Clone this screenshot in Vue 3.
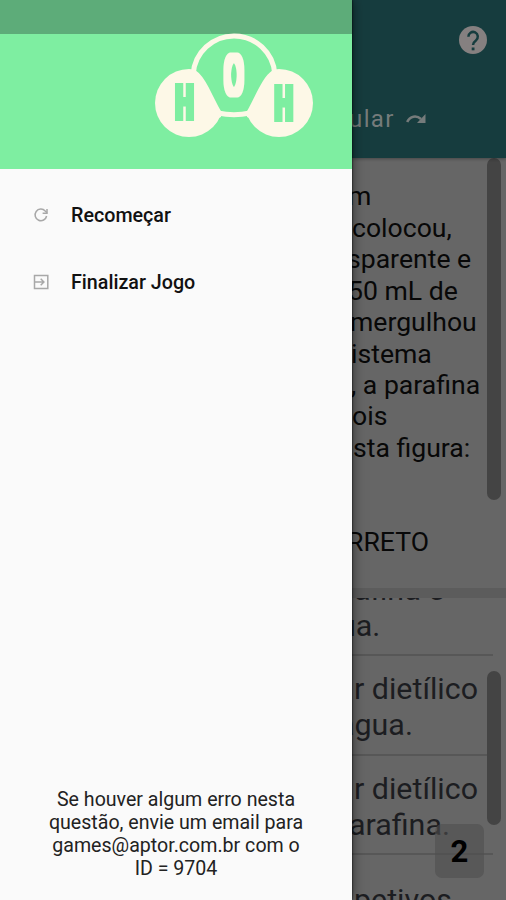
<template>
  <div class="screen">
    <aside class="drawer">
      <div class="status-bar" />
      <header class="drawer-header">
        <svg class="logo" width="164" height="112" viewBox="0 0 164 112">
          <filter id="thicken" x="-50%" y="-50%" width="200%" height="200%" color-interpolation-filters="sRGB">
            <feMorphology operator="dilate" radius="3 3" />
          </filter>
          <circle cx="37" cy="70" r="34" class="blob" />
          <circle cx="127" cy="70" r="34" class="blob" />
          <path class="blob" d="M58 60L69 77V84C62 86 60 91 56 96L40 70Z" />
          <path class="blob" d="M106 60L95 77V84C102 86 104 91 108 96L124 70Z" />
          <path class="core" d="M43 37C54 44 59 61 70 80H94C105 61 110 44 121 37Z" />
          <path class="ring" d="M41.2 41A40.9 40.9 0 0 1 122.8 41" />
          <path class="ring" d="M66 80Q82 83.5 98 80" />
          <g filter="url(#thicken)">
            <text class="letter-h" transform="translate(32.5 85) scale(.55 1)">H</text>
          </g>
          <g filter="url(#thicken)">
            <text class="letter-h" transform="translate(131.8 85.5) scale(.55 1)">H</text>
          </g>
          <g filter="url(#thicken)">
            <text class="letter-o" transform="translate(82 60.5) scale(.5 1)">O</text>
          </g>
        </svg>
      </header>

      <nav class="menu">
        <a class="menu-item">
          <svg width="16" height="16" viewBox="0 0 16 16">
            <path d="M13.6 9A5.8 5.8 0 1 1 12.2 4L14 5.7" />
            <path d="M14 2V6.2H9.6" />
          </svg>
          <span>Recomeçar</span>
        </a>
        <a class="menu-item">
          <svg width="16" height="16" viewBox="0 0 16 16">
            <path d="M1.5 1.5H14.8V14.5H1.5Z" />
            <path d="M1.5 8H10.5M7.7 4.8L10.9 8L7.7 11.2" />
          </svg>
          <span>Finalizar Jogo</span>
        </a>
      </nav>

      <p class="contact">
        Se houver algum erro nesta<br />questão, envie um email para<br />games@aptor.com.br com o<br />ID = 9704
      </p>
    </aside>

    <main class="game">
      <header class="toolbar">
        <svg class="help" width="28" height="28" viewBox="0 0 28 28">
          <circle cx="14" cy="14" r="14" fill="#858080" />
          <path d="M9.4 10.8A4.7 4.7 0 1 1 16.9 14.4C15 15.8 14 16.6 14 19" fill="none" stroke="#163c3e" stroke-width="2.5" />
          <rect x="12.7" y="21.5" width="2.8" height="2.8" fill="#163c3e" />
        </svg>
        <div class="skip">
          <span>ular</span>
          <svg width="20" height="12" viewBox="0 0 20 12">
            <path d="M1.2 9C4 2.8 10.5 2 15 6" fill="none" stroke="#757b7b" stroke-width="2.6" />
            <path d="M19.5 1V10H11Z" fill="#757b7b" />
          </svg>
        </div>
      </header>

      <section class="question">
        <div class="question-text">
          <p v-for="(line, i) in question" :key="i" :style="{ marginLeft: line.shift + 'px' }">{{ line.text }}</p>
        </div>
        <div class="thumb question-thumb" />
      </section>

      <section class="answers">
        <div class="answer-list">
          <div v-for="(answer, i) in answers" :key="i" class="answer">
            <p v-for="(line, j) in answer" :key="j" :style="{ marginLeft: line.shift + 'px' }">{{ line.text }}</p>
          </div>
        </div>
        <div class="thumb answers-thumb" />
        <div class="counter">2</div>
      </section>
    </main>
  </div>
</template>

<script setup>
// shift: where the visible part of the line starts next to the open drawer
const question = [
  { text: 'm', shift: -4 },
  { text: 'colocou,', shift: 0 },
  { text: 'sparente e', shift: -5 },
  { text: '50 mL de', shift: -4 },
  { text: 'mergulhou', shift: -2 },
  { text: 'istema', shift: -1 },
  { text: ', a parafina', shift: -1 },
  { text: 'ois', shift: 0 },
  { text: 'sta figura:', shift: 1 },
  { text: '', shift: 0 },
  { text: '', shift: 0 },
  { text: 'RRETO', shift: -5 },
]

const answers = [
  [
    { text: 'afina e', shift: 2 },
    { text: 'ua.', shift: -13 },
  ],
  [
    { text: 'r dietílico', shift: 2 },
    { text: 'água.', shift: -14 },
  ],
  [
    { text: 'r dietílico', shift: 2 },
    { text: 'arafina.', shift: -3 },
  ],
  [{ text: 'petivos', shift: 2 }],
]
</script>

<style scoped>
.screen {
  position: relative;
  display: flex;
  width: 506px;
  height: 900px;
  overflow: hidden;
  font-family: Roboto, sans-serif;
}

p {
  margin: 0;
}

.drawer {
  display: flex;
  flex-direction: column;
  flex: none;
  width: 352px;
  background: #fafafa;
  box-shadow: 0 0 12px rgba(0, 0, 0, 0.55), 0 0 2px #000;
  z-index: 2;
}

.status-bar {
  height: 34px;
  background: #5dac79;
}

.drawer-header {
  display: flex;
  justify-content: flex-end;
  height: 135px;
  padding-right: 36px;
  background: #7eeea1;
}

.logo {
  margin-top: -1px;
}

.ring {
  fill: none;
  stroke: #fdf8e7;
  stroke-width: 5;
}

.blob {
  fill: #fdf8e7;
}

.core {
  fill: #7eeea1;
}

.letter-h,
.letter-o {
  text-anchor: middle;
}

.letter-h {
  font-size: 43.5px;
  font-weight: 400;
  fill: #7eeea1;
}

.letter-o {
  font-size: 54px;
  font-weight: 300;
  fill: #fdf8e7;
}

.menu {
  display: flex;
  flex-direction: column;
  padding-top: 13px;
}

.menu-item {
  display: flex;
  align-items: center;
  gap: 22px;
  height: 67.3px;
  padding-left: 33px;
  font-size: 19.7px;
  font-weight: 500;
  color: #111;
}

.menu-item svg {
  margin-bottom: 2px;
  fill: none;
  stroke: #a8a8a8;
  stroke-width: 1.5;
}

.contact {
  margin-top: auto;
  padding-bottom: 20px;
  font-size: 19.6px;
  line-height: 23px;
  text-align: center;
  color: #222;
}

.game {
  display: flex;
  flex-direction: column;
  flex: 1;
  min-width: 0;
  background: #666;
}

.toolbar {
  display: flex;
  flex-direction: column;
  justify-content: space-between;
  flex: none;
  box-sizing: border-box;
  height: 158px;
  padding: 26px 19px 24px 0;
  background: #163c3e;
  box-shadow: 0 1px 3px rgba(0, 0, 0, 0.3);
  z-index: 1;
}

.help {
  align-self: flex-end;
}

.skip {
  display: flex;
  align-items: center;
  gap: 11px;
  font-size: 24px;
  line-height: 30px;
  letter-spacing: 1.4px;
  color: #757b7b;
}

.skip span {
  margin-left: -3px;
}

.question {
  display: flex;
  flex: none;
  justify-content: space-between;
  height: 430px;
  overflow: hidden;
}

.question-text {
  padding-top: 22.4px;
  width: 134px;
  font-size: 26.6px;
  line-height: 31.45px;
  white-space: nowrap;
  color: #080808;
}

.question-text p {
  height: 31.45px;
}

.thumb {
  flex: none;
  width: 14px;
  margin-right: 5px;
  border-radius: 7px;
  background: #444;
}

.question-thumb {
  height: 342px;
}

.answers {
  position: relative;
  display: flex;
  justify-content: space-between;
  flex: 1;
  min-height: 0;
  overflow: hidden;
  border-top: 10px solid #5c5c5c;
}

.answer-list {
  display: flex;
  flex-direction: column;
  flex: none;
  width: 141px;
  margin-top: -42px;
  white-space: nowrap;
}

.answer {
  flex: none;
  box-sizing: border-box;
  height: 99.8px;
  padding-top: 15.5px;
  border-bottom: 2px solid #575757;
  font-size: 30.4px;
  line-height: 36px;
  color: #1c1d21;
}

.answer:last-child {
  padding-top: 27px;
}

.answers-thumb {
  height: 154px;
  margin: 73px 5px 0 -20px;
}

.counter {
  position: absolute;
  right: 22px;
  bottom: 22px;
  width: 49px;
  height: 54px;
  border-radius: 7px;
  background: rgba(78, 78, 78, 0.6);
  font-size: 31px;
  font-weight: 700;
  line-height: 56px;
  text-align: center;
  color: #000;
}
</style>

<style>
body {
  margin: 0;
  overflow: hidden;
}
</style>
